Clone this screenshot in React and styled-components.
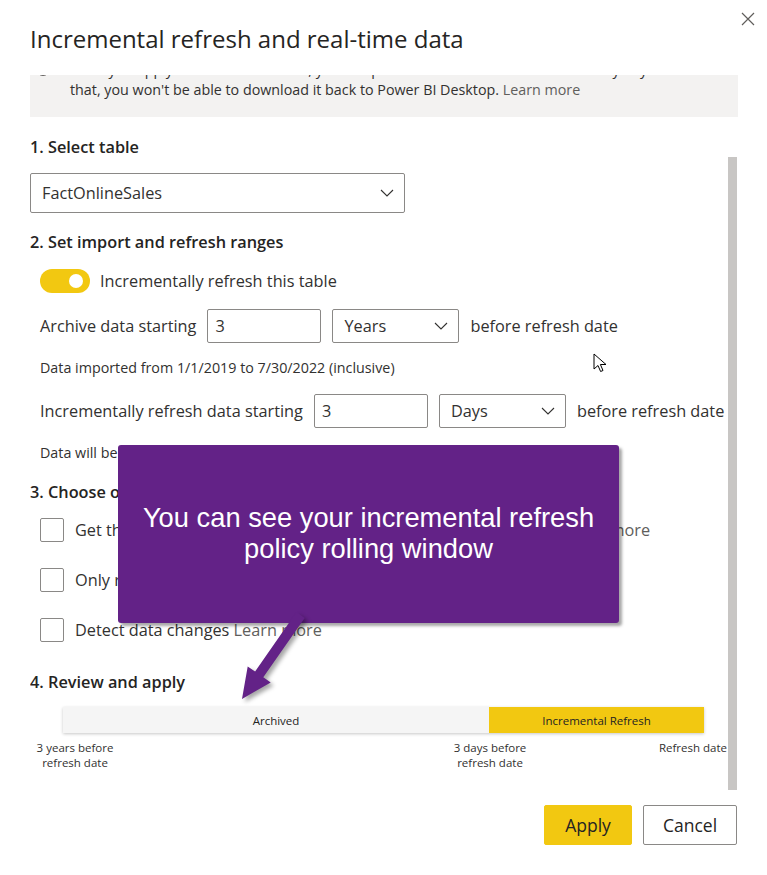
import React from "react";
import styled, { createGlobalStyle } from "styled-components";

const GlobalStyle = createGlobalStyle`
  html, body { margin: 0; padding: 0; background: #fff; }
  body { font-family: "Open Sans", "Segoe UI", "Noto Sans", sans-serif; color: #252423; }
  * { box-sizing: border-box; }
`;

const Dialog = styled.div`
  position: relative;
  width: 767px;
  height: 875px;
  overflow: hidden;
  background: #fff;
  display: flex;
  flex-direction: column;
`;

const Header = styled.div`
  height: 75px;
  display: flex;
  align-items: flex-start;
  padding: 0 10px 0 30px;
`;

const Title = styled.h1`
  margin: 23px 0 0;
  font-size: 24px;
  line-height: 32px;
  font-weight: 400;
  color: #252423;
`;

const CloseButton = styled.button`
  margin: 10px 0 0 auto;
  width: 18px;
  height: 18px;
  padding: 0;
  border: none;
  background: none;
  display: flex;
  align-items: center;
  justify-content: center;
`;

const ScrollArea = styled.div`
  position: relative;
  height: 715px;
  margin: 0 29px 0 30px;
  overflow: hidden;
`;

const ScrollContent = styled.div`
  margin-top: -27px;
  display: flex;
  flex-direction: column;
`;

const Thumb = styled.div`
  position: absolute;
  right: 1px;
  top: 82px;
  width: 9px;
  height: 633px;
  background: #c8c6c4;
`;

const Banner = styled.div`
  background: #f3f2f1;
  display: flex;
  gap: 20px;
  padding: 12px 12px 17px 6px;
  font-size: 14.3px;
  line-height: 20px;
  color: #323130;
  white-space: nowrap;
  overflow: hidden;
`;

const InfoIcon = styled.div`
  flex: none;
  width: 14px;
  height: 14px;
  margin-top: 2px;
  border: 1px solid #605e5c;
  border-radius: 50%;
`;

const MutedLink = styled.span`
  color: #605e5c;
`;

const Heading = styled.div`
  margin-top: ${(p) => p.$top}px;
  font-size: 16.3px;
  line-height: 24px;
  font-weight: 600;
  color: #252423;
`;

const Dropdown = styled.div`
  display: flex;
  align-items: center;
  justify-content: space-between;
  width: ${(p) => p.$width}px;
  height: ${(p) => p.$height}px;
  margin-top: ${(p) => p.$top || 0}px;
  padding: 0 10px 0 11px;
  border: 1px solid #8a8886;
  border-radius: 2px;
  font-size: 16.3px;
  color: #323130;
  background: #fff;
  flex: none;
`;

const Row = styled.div`
  display: flex;
  align-items: center;
  gap: ${(p) => p.$gap || 10}px;
  margin-top: ${(p) => p.$top}px;
  padding-left: 10px;
  font-size: 16.3px;
  color: #323130;
  white-space: nowrap;
`;

const Toggle = styled.div`
  width: 50px;
  height: 24px;
  border-radius: 12px;
  background: #f2c811;
  display: flex;
  align-items: center;
  justify-content: flex-end;
  padding-right: 7px;
  flex: none;
`;

const Knob = styled.div`
  width: 14px;
  height: 14px;
  border-radius: 50%;
  background: #fff;
`;

const NumberInput = styled.div`
  width: 114px;
  height: 34px;
  border: 1px solid #8a8886;
  border-radius: 2px;
  padding-left: 7px;
  display: flex;
  align-items: center;
  font-size: 16.3px;
  color: #323130;
  flex: none;
`;

const Note = styled.div`
  margin-top: ${(p) => p.$top}px;
  padding-left: 10px;
  font-size: 14.3px;
  line-height: 18px;
  color: #323130;
  white-space: nowrap;
`;

const CheckRow = styled(Row)`
  gap: 11px;
`;

const Checkbox = styled.div`
  width: 24px;
  height: 24px;
  border: 1px solid #8a8886;
  border-radius: 2px;
  flex: none;
`;

const Timeline = styled.div`
  display: flex;
  margin: 13px 0 0 33px;
  width: 641px;
  height: 26px;
  box-shadow: 0 1px 3px rgba(0, 0, 0, 0.22);
  font-size: 11.5px;
`;

const Segment = styled.div`
  flex: ${(p) => p.$grow};
  background: ${(p) => p.$bg};
  display: flex;
  align-items: center;
  justify-content: center;
  color: #252423;
`;

const AxisLabels = styled.div`
  display: grid;
  grid-template-columns: 90px 325px 90px 1fr;
  width: 697px;
  margin-top: 7px;
  font-size: 11.5px;
  line-height: 15px;
  color: #323130;
`;

const AxisLabel = styled.div`
  grid-column: ${(p) => p.$col};
  text-align: ${(p) => p.$align || "center"};
`;

const Footer = styled.div`
  display: flex;
  justify-content: flex-end;
  gap: 11px;
  padding: 15px 30px 0 0;
`;

const Button = styled.button`
  height: 40px;
  width: ${(p) => p.$width}px;
  border-radius: 2px;
  border: 1px solid ${(p) => (p.$primary ? "#f2c811" : "#8a8886")};
  background: ${(p) => (p.$primary ? "#f2c811" : "#fff")};
  color: #252423;
  font-family: inherit;
  font-size: 17.5px;
  font-weight: 400;
`;

const Callout = styled.div`
  position: absolute;
  left: 118px;
  top: 445px;
  width: 501px;
  height: 178px;
  background: #632287;
  border-radius: 3px;
  box-shadow: 3px 3px 3px rgba(0, 0, 0, 0.35);
  display: flex;
  align-items: center;
  justify-content: center;
  text-align: center;
  padding-bottom: 2px;
  font-family: "Liberation Sans", Arial, sans-serif;
  font-size: 27.3px;
  line-height: 31px;
  color: #fff;
`;

const CalloutArrow = styled.svg`
  position: absolute;
  left: 230px;
  top: 600px;
  filter: drop-shadow(3px 3px 2px rgba(0, 0, 0, 0.35));
`;

const Cursor = styled.svg`
  position: absolute;
  left: 593px;
  top: 353px;
`;

const Chevron = () => (
  <svg width="14" height="8" viewBox="0 0 14 8">
    <path d="M1 1l6 6 6-6" fill="none" stroke="#323130" strokeWidth="1.1" />
  </svg>
);

export default function App() {
  return (
    <Dialog>
      <GlobalStyle />
      <Header>
        <Title>Incremental refresh and real-time data</Title>
        <CloseButton aria-label="Close">
          <svg width="14" height="14" viewBox="0 0 14 14">
            <path d="M1 1l12 12M13 1L1 13" stroke="#605e5c" strokeWidth="1.2" />
          </svg>
        </CloseButton>
      </Header>

      <ScrollArea>
        <ScrollContent>
          <Banner>
            <InfoIcon />
            <div>
              Once you apply incremental refresh, you can publish to the Power BI service. Every day after
              <br />
              that, you won't be able to download it back to Power BI Desktop. <MutedLink>Learn more</MutedLink>
            </div>
          </Banner>

          <Heading $top={18}>1. Select table</Heading>
          <Dropdown $width={375} $height={40} $top={14}>
            FactOnlineSales
            <Chevron />
          </Dropdown>

          <Heading $top={17}>2. Set import and refresh ranges</Heading>
          <Row $top={15}>
            <Toggle>
              <Knob />
            </Toggle>
            Incrementally refresh this table
          </Row>
          <Row $top={16} $gap={11}>
            Archive data starting
            <NumberInput>3</NumberInput>
            <Dropdown $width={127} $height={34}>
              Years
              <Chevron />
            </Dropdown>
            before refresh date
          </Row>
          <Note $top={16}>Data imported from 1/1/2019 to 7/30/2022 (inclusive)</Note>
          <Row $top={17} $gap={11}>
            Incrementally refresh data starting
            <NumberInput>3</NumberInput>
            <Dropdown $width={127} $height={34}>
              Days
              <Chevron />
            </Dropdown>
            before refresh date
          </Row>
          <Note $top={16}>Data will be incrementally refreshed from 7/28/2022 to 7/30/2022 (inclusive)</Note>

          <Heading $top={18}>3. Choose optional settings</Heading>
          <CheckRow $top={14}>
            <Checkbox />
            <span>
              Get the latest data in real time with DirectQuery (Premium only) <MutedLink>Learn more</MutedLink>
            </span>
          </CheckRow>
          <CheckRow $top={26}>
            <Checkbox />
            Only refresh complete days
          </CheckRow>
          <CheckRow $top={26}>
            <Checkbox />
            <span>
              Detect data changes <MutedLink>Learn more</MutedLink>
            </span>
          </CheckRow>

          <Heading $top={28}>4. Review and apply</Heading>
          <Timeline>
            <Segment $grow={426} $bg="#f5f5f5">Archived</Segment>
            <Segment $grow={215} $bg="#f2c811">Incremental Refresh</Segment>
          </Timeline>
          <AxisLabels>
            <AxisLabel $col={1}>
              3 years before
              <br />
              refresh date
            </AxisLabel>
            <AxisLabel $col={3}>
              3 days before
              <br />
              refresh date
            </AxisLabel>
            <AxisLabel $col={4} $align="right">
              Refresh date
            </AxisLabel>
          </AxisLabels>
        </ScrollContent>
        <Thumb />
      </ScrollArea>

      <Footer>
        <Button $primary $width={88}>Apply</Button>
        <Button $width={94}>Cancel</Button>
      </Footer>

      <Callout>
        You can see your incremental refresh
        <br />
        policy rolling window
      </Callout>
      <CalloutArrow width="90" height="110" viewBox="230 600 90 110">
        <polygon
          points="296.5,612 255.1,671.5 247.7,666.4 242,699 270.7,682.4 263.3,677.3 304.7,618"
          fill="#632287"
        />
      </CalloutArrow>
      <Cursor width="14" height="22" viewBox="0 0 14 22">
        <path
          d="M1 1v15l4-3.5 2.6 6 2.4-1-2.6-6H13z"
          fill="#fff"
          stroke="#000"
          strokeWidth="1"
          strokeLinejoin="round"
        />
      </Cursor>
    </Dialog>
  );
}
